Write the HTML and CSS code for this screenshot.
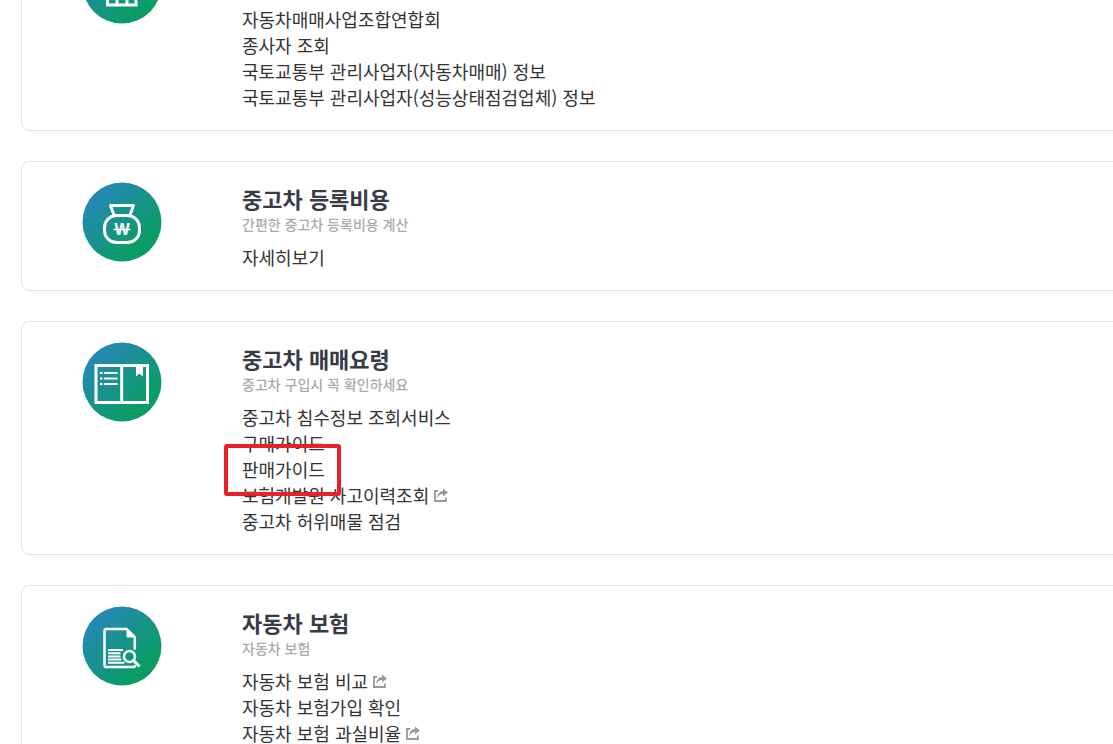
FILE: index.html
```html
<!DOCTYPE html>
<html lang="ko">
<head>
<meta charset="utf-8">
<title>중고차</title>
<link rel="stylesheet" href="styles.css">
</head>
<body>
<svg class="defs" width="0" height="0" aria-hidden="true">
  <defs>
    <linearGradient id="disc" x1="0.1" y1="0.1" x2="0.85" y2="0.9">
      <stop offset="0" stop-color="#2786bd"/>
      <stop offset="0.85" stop-color="#0b9c66"/>
      <stop offset="1" stop-color="#0a9e62"/>
    </linearGradient>
    <symbol id="share" viewBox="0 0 14 14">
      <path d="M4 3H1V13H12V9.500" fill="none" stroke="#999" stroke-width="1.800"/>
      <path d="M9 .5 14 4.500 9 8.500V6C6.500 6 4.500 7.500 3 10 3.500 6 5.500 3.200 9 3Z" fill="#999"/>
    </symbol>
  </defs>
</svg>
<main class="cards">
  <section class="card">
    <svg class="icon" viewBox="0 0 80 80" aria-hidden="true">
      <circle cx="40" cy="40" r="39.500" fill="url(#disc)"/>
      <path d="M25.500 40V61H54V40M35 61V40M45 61V40M25.500 54H54" fill="none" stroke="#fff" stroke-width="3"/>
    </svg>
    <ul class="links links-only">
      <li><a href="#">자동차매매사업조합연합회</a></li>
      <li><a href="#">종사자 조회</a></li>
      <li><a href="#">국토교통부 관리사업자(자동차매매) 정보</a></li>
      <li><a href="#">국토교통부 관리사업자(성능상태점검업체) 정보</a></li>
    </ul>
  </section>

  <section class="card">
    <svg class="icon" viewBox="0 0 80 80" aria-hidden="true">
      <circle cx="40" cy="40" r="39.500" fill="url(#disc)"/>
      <g fill="none" stroke="#fff" stroke-width="3" stroke-linejoin="round">
        <path d="M32 33 28.500 23.500H51.500L48 33"/>
        <rect x="22.500" y="33.500" width="35" height="27" rx="12"/>
      </g>
      <text class="won" x="40" y="52.500" text-anchor="middle">W</text>
      <path d="M31.500 47.500H48.500" stroke="#fff" stroke-width="1.500"/>
    </svg>
    <div class="body">
      <h2 class="title">중고차 등록비용</h2>
      <p class="note">간편한 중고차 등록비용 계산</p>
      <ul class="links">
        <li><a href="#">자세히보기</a></li>
      </ul>
    </div>
  </section>

  <section class="card">
    <svg class="icon" viewBox="0 0 80 80" aria-hidden="true">
      <circle cx="40" cy="40" r="39.500" fill="url(#disc)"/>
      <path d="M14 23.500H65.500V60.500H14ZM39.700 23.500V60.500" fill="none" stroke="#fff" stroke-width="3"/>
      <path d="M18 31H20.500M22 31H35.500M18 36.500H20.500M22 36.500H35.500M18 42H20.500M22 42H35.500" stroke="#fff" stroke-width="2"/>
      <path d="M54 24H61V34.500L57.500 31.500 54 34.500Z" fill="#fff"/>
    </svg>
    <div class="body">
      <h2 class="title">중고차 매매요령</h2>
      <p class="note">중고차 구입시 꼭 확인하세요</p>
      <ul class="links">
        <li><a href="#">중고차 침수정보 조회서비스</a></li>
        <li><a href="#">구매가이드</a></li>
        <li class="marked"><a href="#">판매가이드</a></li>
        <li><a href="#">보험개발원 사고이력조회<svg class="share" aria-hidden="true"><use href="#share"/></svg></a></li>
        <li><a href="#">중고차 허위매물 점검</a></li>
      </ul>
    </div>
  </section>

  <section class="card">
    <svg class="icon" viewBox="0 0 80 80" aria-hidden="true">
      <circle cx="40" cy="40" r="39.500" fill="url(#disc)"/>
      <path d="M52.800 43.500V31L44.500 23H24Q22.500 23 22.500 24.500V59.500Q22.500 61 24 61H52Q53 61 53 59" fill="none" stroke="#fff" stroke-width="2.500"/>
      <path d="M44.500 22 54 31.500H46Q44.500 31.500 44.500 30Z" fill="#fff"/>
      <path d="M26 44H41M26 47.200H38.500M26 50.400H38.500M26 53.600H39.500M26 56.800H42.500" stroke="#fff" stroke-width="2"/>
      <circle cx="47.500" cy="50.500" r="5.500" fill="none" stroke="#fff" stroke-width="2.500"/>
      <path d="M51.500 54.500 57.500 60.500" stroke="#fff" stroke-width="3"/>
    </svg>
    <div class="body">
      <h2 class="title">자동차 보험</h2>
      <p class="note">자동차 보험</p>
      <ul class="links">
        <li><a href="#">자동차 보험 비교<svg class="share" aria-hidden="true"><use href="#share"/></svg></a></li>
        <li><a href="#">자동차 보험가입 확인</a></li>
        <li><a href="#">자동차 보험 과실비율<svg class="share" aria-hidden="true"><use href="#share"/></svg></a></li>
      </ul>
    </div>
  </section>
</main>
</body>
</html>
```

FILE: styles.css
```css
* {
  box-sizing: border-box;
}

body {
  margin: 0;
  height: 100vh;
  overflow: hidden;
  background: #fff;
  color: #333;
  font-family: "Noto Sans CJK KR", "Noto Sans", sans-serif;
}

.defs {
  position: absolute;
}

/* The column is scrolled part-way past its first card and runs off the right edge. */
.cards {
  display: flex;
  flex-direction: column;
  gap: 30px;
  margin: -77px -20px 0 21px;
}

.card {
  display: flex;
  align-items: flex-start;
  gap: 80px;
  padding: 20px 60px;
  border: 1px solid #e2e2e2;
  border-radius: 8px;
}

.icon {
  flex: none;
  width: 80px;
  height: 80px;
}

.won {
  fill: #fff;
  font: bold 16px "Liberation Sans", sans-serif;
}

.title {
  margin: 0;
  color: #383a46;
  font-size: 22px;
  font-weight: 700;
  line-height: 32px;
}

.note {
  margin: 0 0 10px;
  color: #aaa;
  font-size: 14px;
  font-weight: 500;
  line-height: 20px;
}

.links {
  margin: 0;
  padding: 0;
  list-style: none;
  font-size: 18px;
  line-height: 26px;
}

.links-only {
  margin-top: 62px;
}

.links a {
  color: inherit;
  text-decoration: none;
}

.share {
  width: 14px;
  height: 14px;
  margin-left: 5px;
  vertical-align: 1px;
}

.marked {
  position: relative;
  width: fit-content;
}

.marked::after {
  content: "";
  position: absolute;
  inset: -12px -16px -14px -18px;
  border: 4px solid #e8202a;
  border-radius: 3px;
  pointer-events: none;
}
```
